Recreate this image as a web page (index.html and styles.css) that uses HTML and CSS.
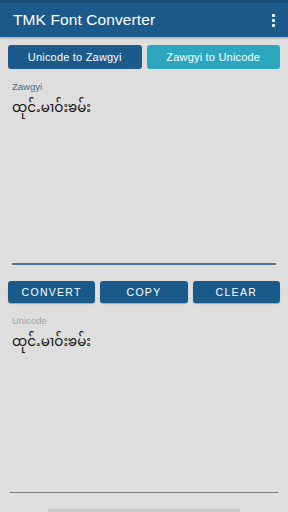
FILE: index.html
```html
<!DOCTYPE html>
<html>
<head>
<meta charset="utf-8">
<link rel="stylesheet" href="styles.css">
</head>
<body>
<div class="app">
  <header class="appbar">
    <span class="title">TMK Font Converter</span>
    <span class="menu"><i></i><i></i><i></i></span>
  </header>
  <div class="tabs">
    <button class="tab dark">Unicode to Zawgyi</button>
    <button class="tab teal">Zawgyi to Unicode</button>
  </div>
  <section class="field input">
    <div class="label blue">Zawgyi</div>
    <div class="text">ထုင်ႉမၢဝ်းၶမ်း</div>
  </section>
  <div class="actions">
    <button class="act">CONVERT</button>
    <button class="act">COPY</button>
    <button class="act">CLEAR</button>
  </div>
  <section class="field output">
    <div class="label grey">Unicode</div>
    <div class="text">ထုင်ႉမၢဝ်းၶမ်း</div>
  </section>
  <div class="navhint"></div>
</div>
</body>
</html>
```
FILE: styles.css
```css
* { box-sizing: border-box; }
html, body { margin: 0; padding: 0; }
body {
  width: 288px;
  height: 512px;
  background: #dedede;
  font-family: "Liberation Sans", Arial, "Noto Sans Myanmar", sans-serif;
  overflow: hidden;
}
.app { display: flex; flex-direction: column; height: 512px; }
.appbar {
  height: 37px;
  background: #1c5a8b;
  border-top: 3px solid #174e7a;
  display: flex;
  align-items: center;
  justify-content: space-between;
  padding: 0 13px 0 13px;
  box-shadow: 0 1px 2px rgba(0,0,0,0.25);
}
.title { color: #fff; font-size: 15.5px; letter-spacing: 0.1px; padding-top: 1px; }
.menu { display: flex; flex-direction: column; gap: 2px; padding-top: 1px; }
.menu i { display: block; width: 3px; height: 3px; background: #fff; border-radius: 1px; }
.tabs { display: flex; gap: 5px; padding: 8px 8px 0 8px; }
.tab {
  flex: 1;
  height: 24px;
  border: none;
  border-radius: 3px;
  color: #fff;
  font-family: "Liberation Sans", Arial, sans-serif;
  font-size: 11px;
  letter-spacing: 0.2px;
  padding: 0;
}
.tab.dark { background: #1b5a8b; }
.tab.teal { background: #2aa7bf; }
.label { font-size: 9.5px; height: 11px; line-height: 11px; }
.label.blue { color: #3d6e96; }
.label.grey { color: #a2a2a2; }
.text {
  margin-top: 9px;
  font-size: 13.5px;
  line-height: 16px;
  color: #111;
  font-family: "Noto Sans Myanmar", "Padauk", "Myanmar Text", sans-serif;
}
.input {
  height: 186px;
  margin: 12px 12px 0 12px;
  padding: 0;
  border-bottom: 2px solid #4d7090;
}
.actions { display: flex; gap: 5px; padding: 16px 8px 0 8px; }
.act {
  flex: 1;
  height: 22px;
  border: none;
  border-radius: 3px;
  background: #1a5a8b;
  color: #fff;
  font-family: "Liberation Sans", Arial, sans-serif;
  font-size: 10.5px;
  letter-spacing: 1.3px;
  padding: 0;
  box-shadow: 0 1px 1px rgba(0,0,0,0.25);
}
.output {
  margin: 12px 10px 0 10px;
  padding: 0 2px;
  height: 180px;
  border-bottom: 1px solid #7a7a7a;
}
.navhint {
  margin: 16px auto 0 auto;
  width: 192px;
  height: 3px;
  background: #c9c9c9;
}
```
